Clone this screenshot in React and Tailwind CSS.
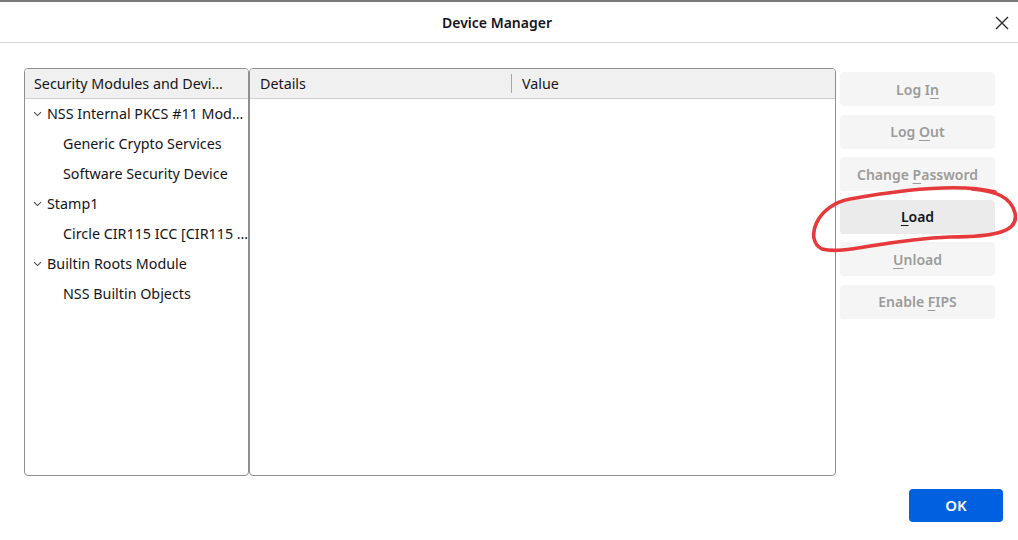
import React from 'react';

const Chevron = () => (
	<svg width="9" height="6" viewBox="0 0 9 6" className="mr-[5px] shrink-0">
		<path d="M1 1.2 L4.5 4.6 L8 1.2" fill="none" stroke="#4a4a4a" strokeWidth="1.1" />
	</svg>
);

const treeRows = [
	{ label: 'NSS Internal PKCS #11 Mod…', parent: true },
	{ label: 'Generic Crypto Services' },
	{ label: 'Software Security Device' },
	{ label: 'Stamp1', parent: true },
	{ label: 'Circle CIR115 ICC [CIR115 …' },
	{ label: 'Builtin Roots Module', parent: true },
	{ label: 'NSS Builtin Objects' },
];

const SideButton = ({ pre, mn, post, enabled }) => (
	<div
		className={`h-[34px] rounded-[4px] flex items-center justify-center text-[14px] font-semibold ${
			enabled ? 'bg-[#ebebeb] text-[#15141a]' : 'bg-[#f5f5f5] text-[#9b9b9b]'
		}`}
	>
		<span>
			{pre}
			<span className="underline underline-offset-[3px]">{mn}</span>
			{post}
		</span>
	</div>
);

export default function App() {
	return (
		<div
			className="relative w-[1018px] h-[540px] bg-white flex flex-col overflow-hidden text-[#15141a]"
			style={{ fontFamily: '"Noto Sans", "Open Sans", sans-serif' }}
		>
			<div className="h-[2px] bg-[#7b7b7b]" />

			{/* Title bar */}
			<div className="relative h-[41px] border-b border-[#d6d6d6] flex items-center justify-center pr-[24px]">
				<p className="text-[14px] font-semibold">Device Manager</p>
				<svg width="14" height="14" viewBox="0 0 14 14" className="absolute right-[9px] top-[14px]">
					<path d="M1 1 L13 13 M13 1 L1 13" stroke="#2b2b2b" strokeWidth="1.4" />
				</svg>
			</div>

			{/* Body */}
			<div className="flex pl-[24px] pt-[25px]">
				{/* Tree panel */}
				<div className="w-[225px] h-[408px] border border-[#8f8f8f] rounded-[4px] overflow-hidden">
					<div className="h-[30px] bg-[#f0f0f0] border-b border-[#d0d0d0] flex items-center pl-[9px] text-[14.3px] whitespace-nowrap">
						Security Modules and Devi…
					</div>
					{treeRows.map((row, i) => (
						<div key={i} className="h-[30px] flex items-center text-[14.3px] whitespace-nowrap">
							{row.parent ? (
								<div className="flex items-center pl-[8px]">
									<Chevron />
									{row.label}
								</div>
							) : (
								<div className="pl-[38px]">{row.label}</div>
							)}
						</div>
					))}
				</div>

				{/* Details panel */}
				<div className="w-[587px] h-[408px] border border-[#8f8f8f] rounded-[4px] overflow-hidden">
					<div className="h-[30px] bg-[#f0f0f0] border-b border-[#d0d0d0] flex items-center text-[14.3px]">
						<div className="w-[261px] pl-[10px]">Details</div>
						<div className="h-[19px] w-px bg-[#a8a8a8]" />
						<div className="pl-[10px]">Value</div>
					</div>
				</div>

				{/* Buttons */}
				<div className="ml-[4px] w-[155px] pt-[4px] flex flex-col gap-[8.5px]">
					<SideButton pre="Log I" mn="n" post="" />
					<SideButton pre="Log " mn="O" post="ut" />
					<SideButton pre="Change " mn="P" post="assword" />
					<SideButton pre="" mn="L" post="oad" enabled />
					<SideButton pre="" mn="U" post="nload" />
					<SideButton pre="Enable " mn="F" post="IPS" />
				</div>
			</div>

			{/* Footer */}
			<div className="flex justify-end pr-[15px] pt-[13px]">
				<button className="w-[94px] h-[33px] rounded-[4px] bg-[#0061e0] text-white text-[15px] font-semibold">
					OK
				</button>
			</div>

			{/* Red annotation around Load */}
			<svg className="absolute left-0 top-0 pointer-events-none" width="1018" height="540">
				<path
					d="M995 192 C960 183 900 190 850 199 C816 205 804 240 822 249 C845 255 880 240 950 237 C997 237 1019 231 1015 213 C1011 197 996 191 972 189"
					fill="none"
					stroke="#e6393c"
					strokeWidth="3.6"
					strokeLinecap="round"
				/>
			</svg>
		</div>
	);
}
